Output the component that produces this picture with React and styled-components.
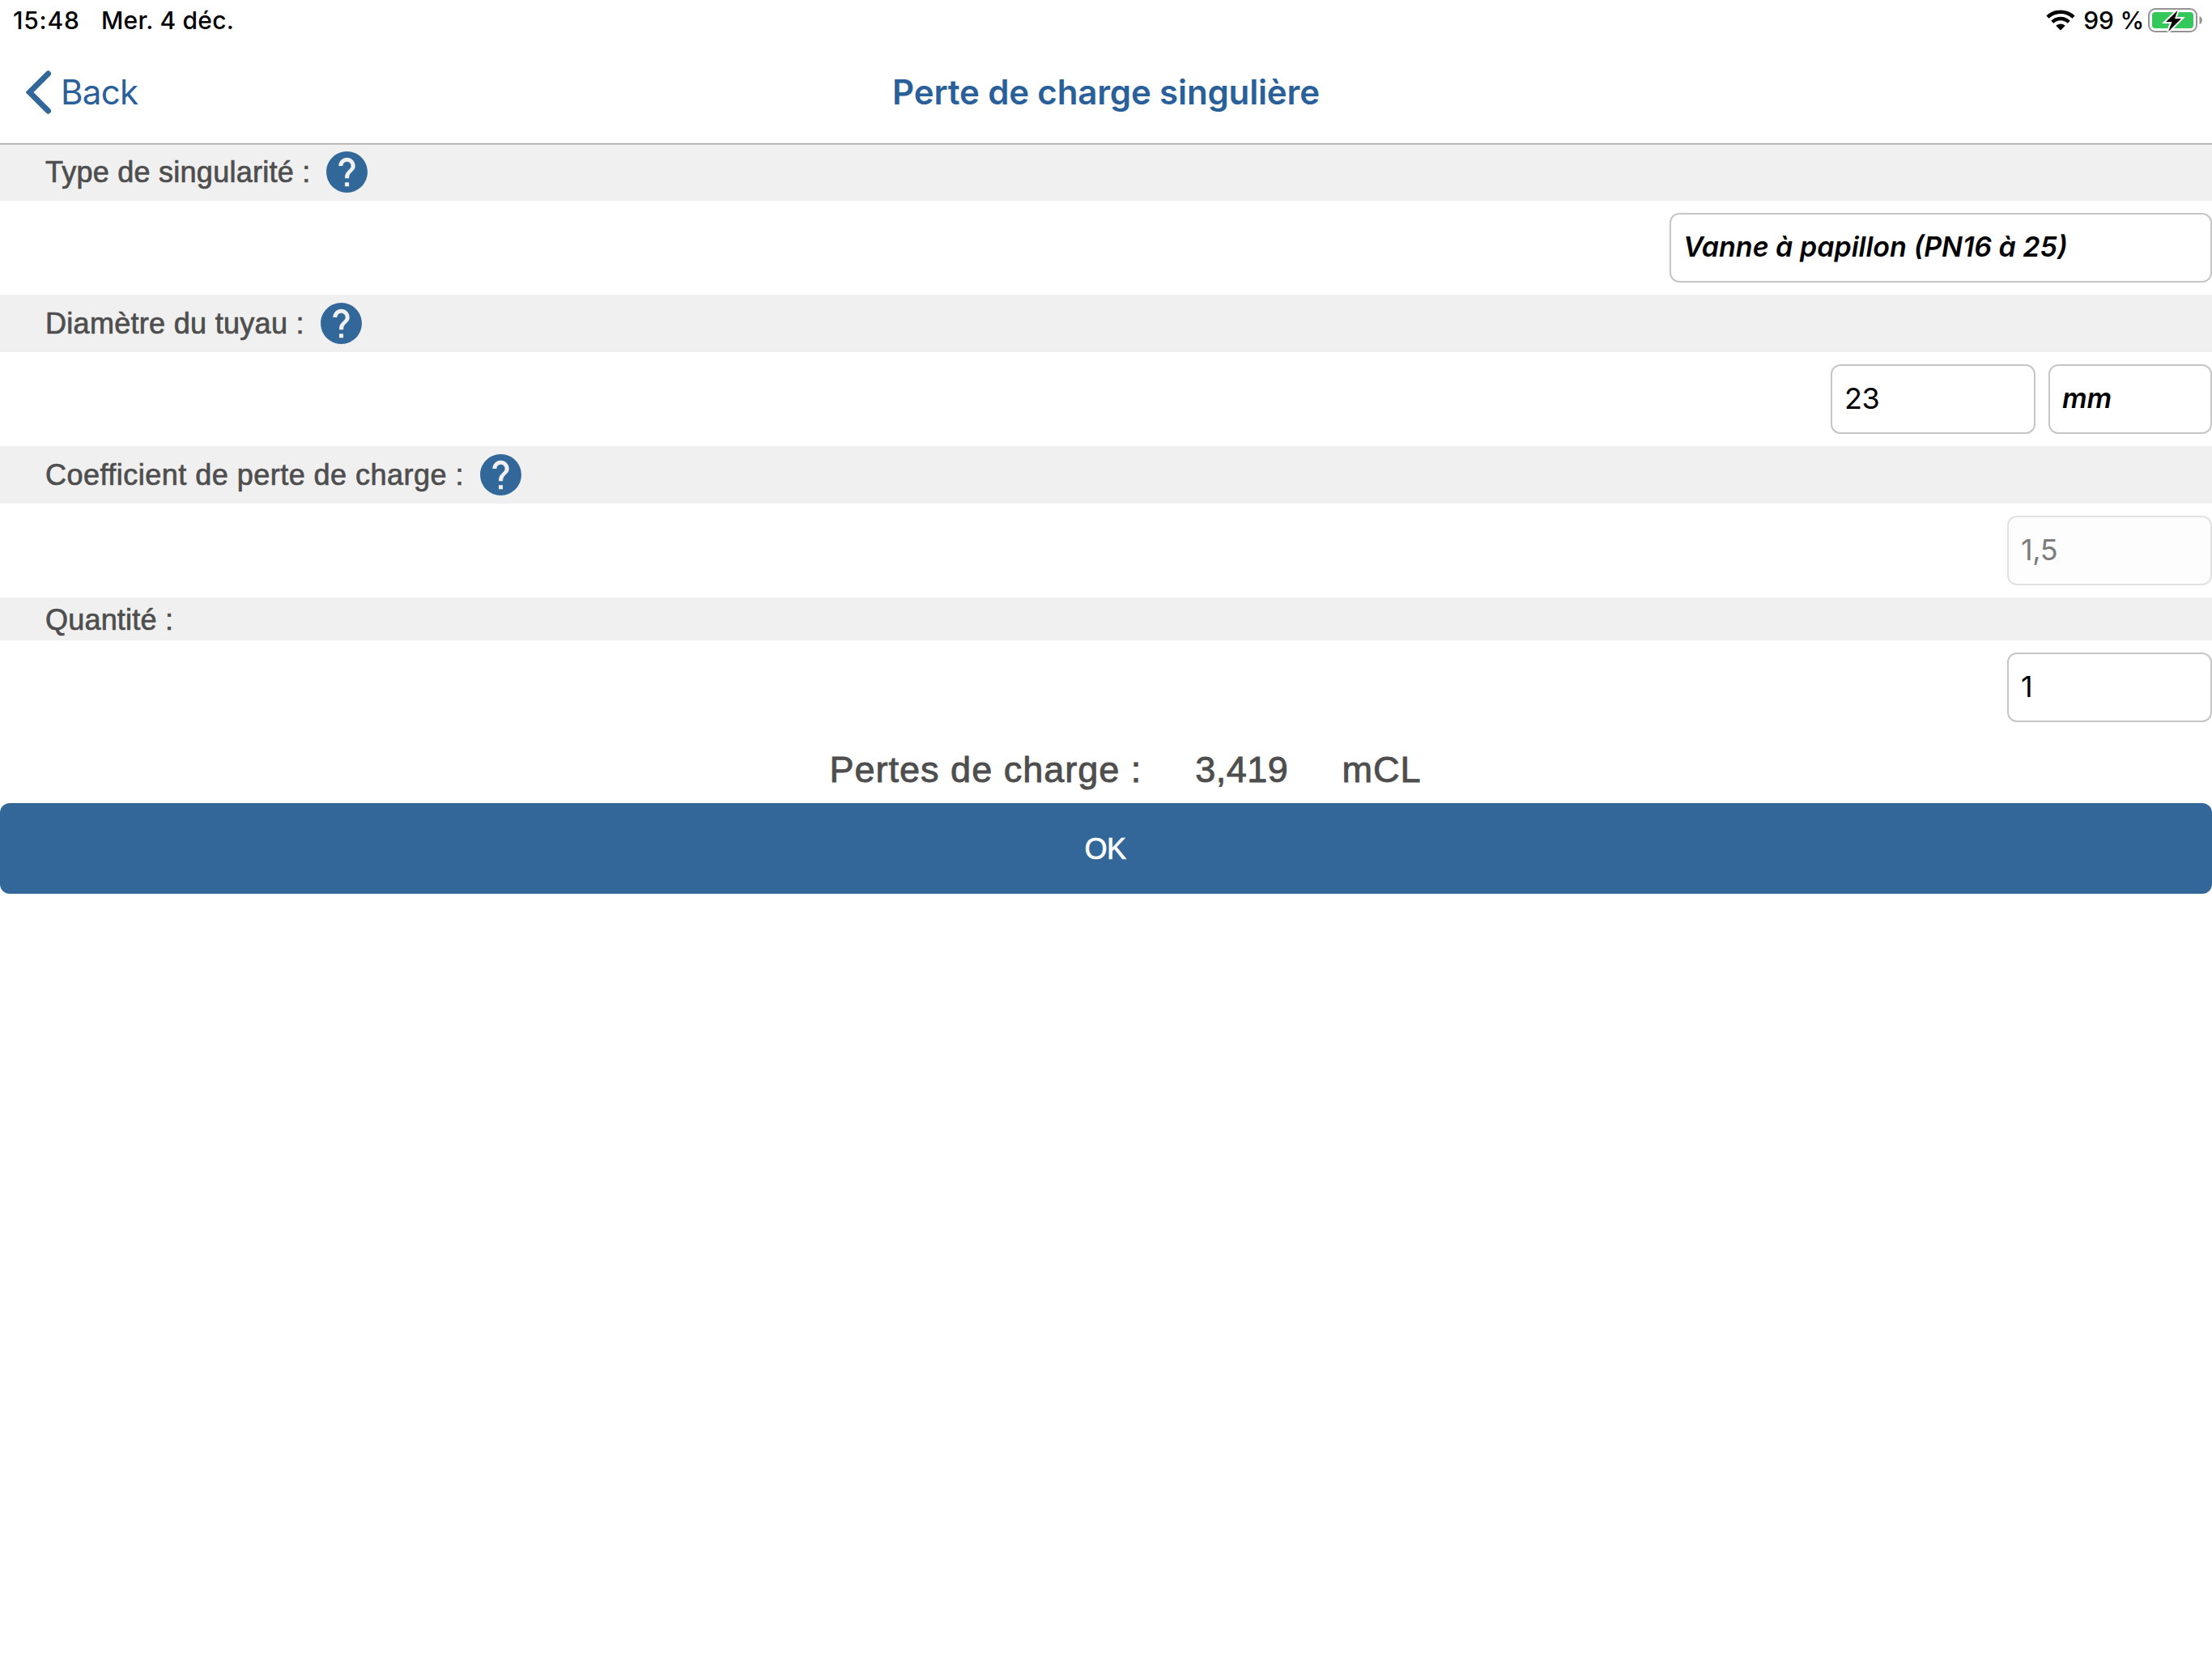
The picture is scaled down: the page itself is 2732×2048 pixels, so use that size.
import styled, { createGlobalStyle } from "styled-components";
import { MdHelp } from "react-icons/md";

const fields = [
  {
    label: "Type de singularité :",
    spacing: 0.25,
    help: true,
    inputs: [{ value: "Vanne à papillon (PN16 à 25)", width: 670, select: true }],
  },
  {
    label: "Diamètre du tuyau :",
    spacing: 0.3,
    help: true,
    inputs: [
      { value: "23", width: 253 },
      { value: "mm", width: 202, select: true },
    ],
  },
  {
    label: "Coefficient de perte de charge :",
    spacing: 0.48,
    help: true,
    inputs: [{ value: "1,5", width: 253, disabled: true }],
  },
  {
    label: "Quantité :",
    spacing: 0.2,
    help: false,
    inputs: [{ value: "1", width: 253 }],
  },
];

export default function App() {
  return (
    <PageStyled>
      <GlobalStyle />
      <StatusBar />
      <Header />
      {fields.map((field) => (
        <Field key={field.label} {...field} />
      ))}
      <ResultStyled>
        <span>Pertes de charge :</span>
        <span className="value">3,419</span>
        <span>mCL</span>
      </ResultStyled>
      <OkButton>OK</OkButton>
    </PageStyled>
  );
}

function StatusBar() {
  return (
    <StatusBarStyled>
      <span className="time">15:48</span>
      <span className="date">Mer. 4 déc.</span>
      <WifiIcon />
      <span className="percent">99 %</span>
      <BatteryIcon />
    </StatusBarStyled>
  );
}

function Header() {
  return (
    <HeaderStyled>
      <BackButton>
        <svg width="32" height="54" viewBox="0 0 32 54" fill="none">
          <path d="M27.5 4 L4.5 27 L27.5 50" stroke="#32679a" strokeWidth="7" strokeLinecap="round" />
        </svg>
        <span>Back</span>
      </BackButton>
      <h1>Perte de charge singulière</h1>
    </HeaderStyled>
  );
}

function Field({ label, spacing, help, inputs }) {
  return (
    <>
      <LabelBar $help={help} $spacing={spacing}>
        <label>{label}</label>
        {help && <MdHelp size={61} />}
      </LabelBar>
      <InputRow>
        {inputs.map(({ value, width, select, disabled }) => (
          <InputBox key={value} $width={width} $select={select} $disabled={disabled}>
            {value}
          </InputBox>
        ))}
      </InputRow>
    </>
  );
}

function WifiIcon() {
  return (
    <svg width="36" height="26" viewBox="0 0 36 26" fill="none" stroke="#000">
      <path d="M2 9.2 A23 23 0 0 1 34 9.2" strokeWidth="4.6" />
      <path d="M7.8 15.2 A14.6 14.6 0 0 1 28.2 15.2" strokeWidth="4.4" />
      <path d="M18 25.5 L12.3 19.8 A8.2 8.2 0 0 1 23.7 19.8 Z" fill="#000" stroke="none" />
    </svg>
  );
}

function BatteryIcon() {
  return (
    <svg width="68" height="32" viewBox="0 0 68 32">
      <rect x="1" y="2" width="59" height="28" rx="8" fill="#fff" stroke="#949494" strokeWidth="2" />
      <rect x="5" y="6" width="51" height="20" rx="4" fill="#34c759" />
      <path d="M63.5 11 C68 12.5 68 19.5 63.5 21 Z" fill="#949494" />
      <path
        d="M36.5 4 L22 18 H29.5 L25 30 L41 14 H33 Z"
        fill="#000"
        stroke="#fff"
        strokeWidth="4"
        paintOrder="stroke"
      />
    </svg>
  );
}

const GlobalStyle = createGlobalStyle`
  body {
    margin: 0;
    background: #fff;
  }

  * {
    box-sizing: border-box;
  }
`;

const PageStyled = styled.div`
  width: 2732px;
  height: 2048px;
  display: flex;
  flex-direction: column;
  overflow: hidden;
  background: #fff;
  font-family: "Liberation Sans", Arial, sans-serif;
`;

const StatusBarStyled = styled.div`
  height: 50px;
  display: flex;
  align-items: center;
  padding: 0 11px 0 16px;
  font: 500 30px/48px Inter, sans-serif;
  color: #000;
  white-space: pre;

  .time {
    width: 109px;
    letter-spacing: 0.8px;
  }

  .date {
    flex: 1;
    letter-spacing: 0.2px;
  }

  .percent {
    margin: 0 5px 0 10px;
    letter-spacing: -0.2px;
  }
`;

const HeaderStyled = styled.header`
  position: relative;
  height: 127px;
  display: grid;
  grid-template-columns: 1fr auto 1fr;
  align-items: center;
  padding: 0 32px;
  color: #2a6099;
  font-family: Inter, sans-serif;
  box-shadow: 0 1px 0 #a2a2a2, 0 2px 0 #cdcdcd;

  h1 {
    margin: 0;
    font-size: 42px;
    font-weight: 600;
    line-height: 126px;
    letter-spacing: -0.14px;
  }
`;

const BackButton = styled.div`
  display: flex;
  align-items: center;
  gap: 11px;
  font-size: 42px;
  line-height: 126px;
  letter-spacing: -0.7px;
`;

const LabelBar = styled.div`
  height: ${({ $help }) => ($help ? 71 : 53)}px;
  display: flex;
  align-items: center;
  padding-left: 56px;
  background: #f0f0f0;
  color: #4e4e4e;

  label {
    font-size: 36px;
    letter-spacing: ${({ $spacing }) => $spacing}px;
    padding-top: ${({ $help }) => ($help ? 0 : 2)}px;
    -webkit-text-stroke: 0.7px #4e4e4e;
  }

  svg {
    margin-left: 15px;
    color: #32679a;
  }
`;

const InputRow = styled.div`
  height: 116px;
  display: flex;
  justify-content: flex-end;
  align-items: center;
  gap: 16px;
`;

const InputBox = styled.div`
  width: ${({ $width }) => $width}px;
  height: 86px;
  display: flex;
  align-items: center;
  padding: 0 15px 3px;
  border: 2px solid ${({ $disabled }) => ($disabled ? "#e2e2e2" : "#c6c6c6")};
  border-radius: 12px;
  background: ${({ $disabled }) => ($disabled ? "#fdfdfd" : "#fff")};
  color: ${({ $disabled }) => ($disabled ? "#7c7c7c" : "#000")};
  font-family: Inter, sans-serif;
  font-size: ${({ $select }) => ($select ? 34 : 36)}px;
  font-style: ${({ $select }) => ($select ? "italic" : "normal")};
  font-weight: ${({ $select }) => ($select ? 600 : 400)};
  letter-spacing: ${({ $select }) => ($select ? 0 : -0.4)}px;
`;

const ResultStyled = styled.div`
  height: 85px;
  display: flex;
  justify-content: center;
  align-items: center;
  gap: 66px;
  padding: 3px 0 0 48px;
  color: #4e4e4e;
  font-size: 45px;
  letter-spacing: 1px;
  -webkit-text-stroke: 0.9px #4e4e4e;

  .value {
    letter-spacing: 0.5px;
  }
`;

const OkButton = styled.button`
  height: 112px;
  padding: 2px 2px 0 0;
  border: none;
  border-radius: 12px;
  background: #336799;
  color: #fff;
  font: 400 36px "Liberation Sans", Arial, sans-serif;
  letter-spacing: -0.4px;
  -webkit-text-stroke: 0.7px #fff;
`;
